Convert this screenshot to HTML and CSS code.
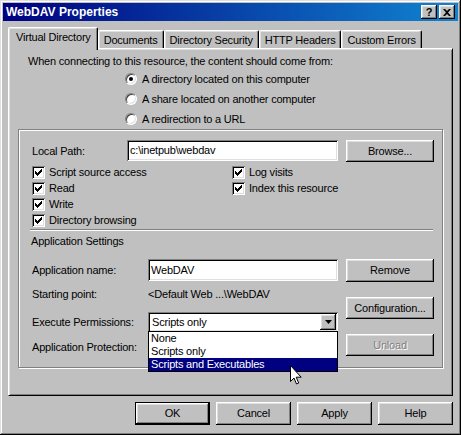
FILE: index.html
```html
<!DOCTYPE html>
<html>
<head>
<meta charset="utf-8">
<title>WebDAV Properties</title>
<link rel="stylesheet" href="styles.css">
</head>
<body>
<div class="window">
  <div class="titlebar">
    <span class="title">WebDAV Properties</span>
    <div class="title-buttons">
      <span class="tbtn raised">?</span>
      <span class="tbtn raised"><svg width="8" height="7" viewBox="0 0 8 7"><path d="M0 0h2l2 2 2-2h2L5 3.5 8 7H6L4 5 2 7H0l3-3.5z"/></svg></span>
    </div>
  </div>
  <div class="content">
    <div class="tabs">
      <div class="tab active">Virtual Directory</div>
      <div class="tab">Documents</div>
      <div class="tab">Directory Security</div>
      <div class="tab">HTTP Headers</div>
      <div class="tab">Custom Errors</div>
    </div>
    <div class="panel">
      <p class="intro">When connecting to this resource, the content should come from:</p>
      <div class="radios">
        <div class="radio-row"><span class="radio checked"></span>A directory located on this computer</div>
        <div class="radio-row"><span class="radio"></span>A share located on another computer</div>
        <div class="radio-row"><span class="radio"></span>A redirection to a URL</div>
      </div>
      <div class="group">
        <div class="path-row">
          <span class="path-label">Local Path:</span>
          <div class="field path-field">c:\inetpub\webdav</div>
          <div class="btn raised side-btn">Browse...</div>
        </div>
        <div class="checks">
          <div class="check-col left">
            <div class="check-row"><span class="checkbox"><svg width="7" height="7" viewBox="0 0 7 7"><path d="M0 2h1v3H0zM1 3h1v3H1zM2 4h1v3H2zM3 3h1v3H3zM4 2h1v3H4zM5 1h1v3H5zM6 0h1v3H6z"/></svg></span>Script source access</div>
            <div class="check-row"><span class="checkbox"><svg width="7" height="7" viewBox="0 0 7 7"><path d="M0 2h1v3H0zM1 3h1v3H1zM2 4h1v3H2zM3 3h1v3H3zM4 2h1v3H4zM5 1h1v3H5zM6 0h1v3H6z"/></svg></span>Read</div>
            <div class="check-row"><span class="checkbox"><svg width="7" height="7" viewBox="0 0 7 7"><path d="M0 2h1v3H0zM1 3h1v3H1zM2 4h1v3H2zM3 3h1v3H3zM4 2h1v3H4zM5 1h1v3H5zM6 0h1v3H6z"/></svg></span>Write</div>
            <div class="check-row"><span class="checkbox"><svg width="7" height="7" viewBox="0 0 7 7"><path d="M0 2h1v3H0zM1 3h1v3H1zM2 4h1v3H2zM3 3h1v3H3zM4 2h1v3H4zM5 1h1v3H5zM6 0h1v3H6z"/></svg></span>Directory browsing</div>
          </div>
          <div class="check-col">
            <div class="check-row"><span class="checkbox"><svg width="7" height="7" viewBox="0 0 7 7"><path d="M0 2h1v3H0zM1 3h1v3H1zM2 4h1v3H2zM3 3h1v3H3zM4 2h1v3H4zM5 1h1v3H5zM6 0h1v3H6z"/></svg></span>Log visits</div>
            <div class="check-row"><span class="checkbox"><svg width="7" height="7" viewBox="0 0 7 7"><path d="M0 2h1v3H0zM1 3h1v3H1zM2 4h1v3H2zM3 3h1v3H3zM4 2h1v3H4zM5 1h1v3H5zM6 0h1v3H6z"/></svg></span>Index this resource</div>
          </div>
        </div>
        <div class="separator"></div>
        <div class="section-title">Application Settings</div>
        <div class="app">
          <div class="app-fields">
            <div class="app-row name-row">
              <span class="app-label">Application name:</span>
              <div class="field app-field">WebDAV</div>
            </div>
            <div class="app-row start-row">
              <span class="app-label">Starting point:</span>
              <span class="app-value">&lt;Default Web ...\WebDAV</span>
            </div>
            <div class="app-row exec-row">
              <span class="app-label">Execute Permissions:</span>
              <div class="combo-wrap">
                <div class="field combo">
                  <span>Scripts only</span>
                  <span class="combo-btn raised"><svg width="7" height="4" viewBox="0 0 7 4"><path d="M0 0h7L3.5 4z"/></svg></span>
                </div>
                <div class="dropdown">
                  <div class="option">None</div>
                  <div class="option">Scripts only</div>
                  <div class="option selected">Scripts and Executables</div>
                </div>
              </div>
            </div>
            <div class="app-row prot-row">
              <span class="app-label">Application Protection:</span>
            </div>
          </div>
          <div class="app-buttons">
            <div class="btn raised side-btn first">Remove</div>
            <div class="btn raised side-btn">Configuration...</div>
            <div class="btn raised side-btn disabled">Unload</div>
          </div>
        </div>
      </div>
    </div>
    <div class="actions">
      <div class="btn raised action default">OK</div>
      <div class="btn raised action">Cancel</div>
      <div class="btn raised action">Apply</div>
      <div class="btn raised action">Help</div>
    </div>
  </div>
  <svg class="cursor" width="12" height="20" viewBox="0 0 12 20"><path d="M0.5 0.5v16l3.5-3.5 2.5 6 2.2-1-2.5-5.8h5z" fill="#fff" stroke="#000" stroke-width="1"/></svg>
</div>
</body>
</html>
```

FILE: styles.css
```css
* { box-sizing: border-box; }

body {
  margin: 0;
  font-family: "Liberation Sans", Arial, sans-serif;
  font-size: 11px;
  line-height: 13px;
  letter-spacing: -0.2px;
  color: #000;
}

.window {
  position: relative;
  width: 461px;
  height: 435px;
  padding: 3px;
  background: #c0c0c0;
  box-shadow: inset -1px -1px #000, inset 1px 1px #dfdfdf, inset -2px -2px #808080, inset 2px 2px #fff;
}

.raised {
  background: #c0c0c0;
  box-shadow: inset -1px -1px #000, inset 1px 1px #fff, inset -2px -2px #808080, inset 2px 2px #dfdfdf;
}

.titlebar {
  height: 18px;
  display: flex;
  align-items: center;
  justify-content: space-between;
  padding: 0 3px 0 3px;
  background: linear-gradient(to right, #000080, #1084d0);
}

.title {
  color: #fff;
  font-weight: bold;
  font-size: 12px;
  letter-spacing: 0;
}

.title-buttons {
  display: flex;
  gap: 2px;
}

.tbtn {
  width: 16px;
  height: 14px;
  display: flex;
  align-items: center;
  justify-content: center;
  font-weight: bold;
  font-size: 11px;
  line-height: 14px;
}

.content {
  padding: 6px 5px 0 5px;
}

.tabs {
  display: flex;
  align-items: flex-end;
  height: 23px;
  margin-bottom: -2px;
  position: relative;
  z-index: 1;
}

.tab {
  height: 18px;
  margin-bottom: 2px;
  padding: 3px 5px 0 5px;
  border-top: 1px solid #fff;
  border-left: 1px solid #fff;
  border-right: 1px solid #000;
  border-radius: 2px 2px 0 0;
  box-shadow: inset -1px 0 #808080, inset 1px 1px #dfdfdf;
  background: #c0c0c0;
  white-space: nowrap;
}

.tab.active {
  height: 23px;
  margin-bottom: 0;
  padding: 3px 6px 0 7px;
}

.panel {
  height: 348px;
  padding: 6px 9px 0 9px;
  border: 1px solid;
  border-color: #fff #000 #000 #fff;
  box-shadow: inset 1px 1px #dfdfdf, inset -1px -1px #808080;
}

.intro {
  margin: 0 0 0 10px;
}

.radios {
  margin: 1px 0 0 107px;
}

.radio-row {
  height: 20px;
  display: flex;
  align-items: center;
  gap: 5px;
}

.radio {
  position: relative;
  width: 12px;
  height: 12px;
  border-radius: 50%;
  background: #fff;
  border: 1px solid;
  border-color: #808080 #fff #fff #808080;
  box-shadow: inset 1px 1px #404040, inset -1px -1px #dfdfdf;
}

.radio.checked::after {
  content: "";
  position: absolute;
  left: 3px;
  top: 3px;
  width: 4px;
  height: 4px;
  border-radius: 50%;
  background: #000;
}

.group {
  width: 425px;
  padding: 10px 7px 7px 13px;
  border: 1px solid #808080;
  box-shadow: inset 1px 1px #fff, 1px 1px #fff;
}

.field {
  background: #fff;
  padding: 0 4px;
  display: flex;
  align-items: center;
  box-shadow: inset 1px 1px #808080, inset -1px -1px #fff, inset 2px 2px #000, inset -2px -2px #dfdfdf;
}

.path-row {
  display: flex;
  align-items: center;
  height: 22px;
}

.path-label {
  width: 95px;
}

.path-field {
  width: 211px;
  height: 21px;
  align-self: flex-start;
  padding-left: 3px;
}

.btn {
  display: flex;
  align-items: center;
  justify-content: center;
  height: 23px;
}

.side-btn {
  width: 88px;
  margin-left: 8px;
}

.path-row .side-btn {
  height: 22px;
}

.checks {
  display: flex;
  margin-top: 2px;
}

.check-col.left {
  width: 200px;
}

.check-row {
  height: 16px;
  display: flex;
  align-items: center;
  gap: 4px;
}

.checkbox {
  width: 13px;
  height: 13px;
  background: #fff;
  display: flex;
  align-items: center;
  justify-content: center;
  box-shadow: inset 1px 1px #808080, inset -1px -1px #fff, inset 2px 2px #000, inset -2px -2px #dfdfdf;
}

.separator {
  margin: 1px 2px 0 -2px;
  height: 2px;
  border-top: 1px solid #808080;
  border-bottom: 1px solid #fff;
}

.section-title {
  margin: 4px 0 0 -1px;
}

.app {
  display: flex;
  margin-top: 11px;
}

.app-fields {
  width: 306px;
}

.app-row {
  display: flex;
  align-items: center;
}

.app-label {
  width: 116px;
  flex-shrink: 0;
}

.name-row {
  height: 22px;
}

.app-field {
  width: 190px;
  height: 22px;
  padding-left: 3px;
}

.start-row {
  height: 26px;
}

.exec-row {
  height: 20px;
  margin-top: 5px;
}

.combo-wrap {
  position: relative;
  width: 190px;
  height: 20px;
}

.combo {
  height: 20px;
  justify-content: space-between;
  padding: 2px 2px 2px 4px;
}

.combo-btn {
  width: 16px;
  height: 16px;
  display: flex;
  align-items: center;
  justify-content: center;
}

.dropdown {
  position: absolute;
  left: 0;
  top: 19px;
  width: 190px;
  height: 41px;
  background: #fff;
  border: 1px solid #000;
  z-index: 2;
}

.option {
  height: 13px;
  line-height: 13px;
  padding-left: 2px;
  white-space: nowrap;
}

.option.selected {
  background: #000080;
  color: #fff;
}

.prot-row {
  height: 26px;
  margin-top: 2px;
}

.app-buttons {
  display: flex;
  flex-direction: column;
  gap: 15px;
}

.app-buttons .side-btn {
  height: 22px;
}

.app-buttons .side-btn.first {
  height: 23px;
}

.disabled {
  color: #808080;
  text-shadow: 1px 1px #fff;
}

.actions {
  display: flex;
  justify-content: flex-end;
  gap: 6px;
  margin-top: 6px;
}

.action {
  width: 75px;
}

.action.default {
  box-shadow: inset 0 0 0 1px #000, inset -2px -2px #000, inset 2px 2px #fff, inset -3px -3px #808080, inset 3px 3px #dfdfdf;
}

.cursor {
  position: absolute;
  left: 290px;
  top: 365px;
  z-index: 5;
}
```
